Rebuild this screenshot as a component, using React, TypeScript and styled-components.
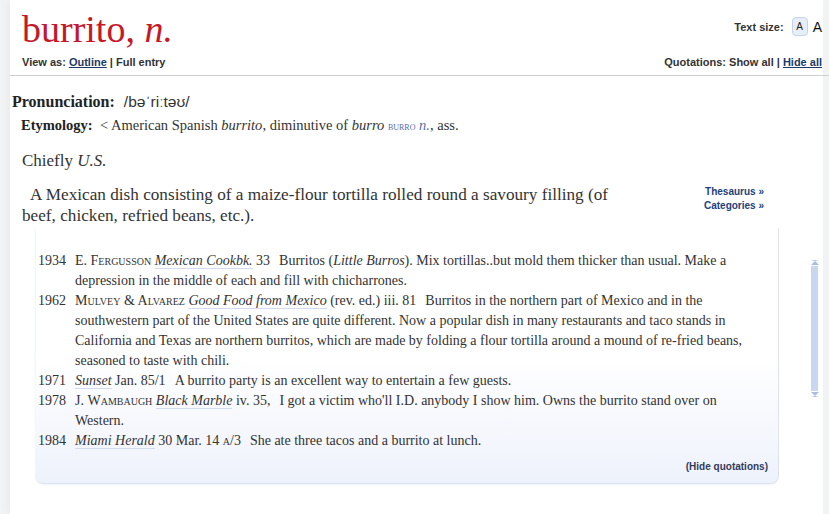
import styled, { createGlobalStyle } from 'styled-components'

const GlobalStyle = createGlobalStyle`
  body {
    margin: 0;
    background: #f2f3f4;
    font-family: 'Liberation Serif', 'Times New Roman', serif;
    color: #222;
  }
`

type Quote = {
  year: string
  author?: [string, string]
  title: string
  ref: React.ReactNode
  text: React.ReactNode
}

function getQuotes(): Quote[] {
  return [
    {
      year: '1934',
      author: ['E. ', 'Fergusson'],
      title: 'Mexican Cookbk.',
      ref: ' 33',
      text: (
        <>
          Burritos (<i>Little Burros</i>). Mix tortillas..but mold them thicker than usual. Make a
          depression in the middle of each and fill with chicharrones.
        </>
      ),
    },
    {
      year: '1962',
      author: ['', 'Mulvey & Alvarez'],
      title: 'Good Food from Mexico',
      ref: ' (rev. ed.) iii. 81',
      text: 'Burritos in the northern part of Mexico and in the southwestern part of the United States are quite different. Now a popular dish in many restaurants and taco stands in California and Texas are northern burritos, which are made by folding a flour tortilla around a mound of re-fried beans, seasoned to taste with chili.',
    },
    {
      year: '1971',
      title: 'Sunset',
      ref: ' Jan. 85/1',
      text: 'A burrito party is an excellent way to entertain a few guests.',
    },
    {
      year: '1978',
      author: ['J. ', 'Wambaugh'],
      title: 'Black Marble',
      ref: ' iv. 35,',
      text: "I got a victim who'll I.D. anybody I show him. Owns the burrito stand over on Western.",
    },
    {
      year: '1984',
      title: 'Miami Herald',
      ref: (
        <>
          {' 30 Mar. 14 '}
          <SmallCaps>a</SmallCaps>/3
        </>
      ),
      text: 'She ate three tacos and a burrito at lunch.',
    },
  ]
}

function App() {
  const quotes = getQuotes()
  return (
    <>
      <GlobalStyle />
      <Page>
        <Main>
          <Header>
            <TopRow>
              <Title>
                burrito, <em>n.</em>
              </Title>
              <TextSize>
                Text size: <SizeButton>A</SizeButton>
                <BigA>A</BigA>
              </TextSize>
            </TopRow>
            <SubRow>
              <ToolText>
                View as: <ToolLink>Outline</ToolLink> | Full entry
              </ToolText>
              <ToolText>
                Quotations: Show all | <ToolLink>Hide all</ToolLink>
              </ToolText>
            </SubRow>
          </Header>

          <Body>
            <Pronunciation>
              <Label>Pronunciation:</Label>
              <Ipa>/bəˈriːtəʊ/</Ipa>
            </Pronunciation>
            <Etymology>
              <Label>Etymology:</Label>&nbsp; &lt; American Spanish <i>burrito</i>, diminutive of{' '}
              <i>burro</i> <XRef>burro</XRef> <XRefPos>n.</XRefPos>, ass.
            </Etymology>
            <Usage>
              Chiefly <i>U.S.</i>
            </Usage>
            <DefRow>
              <DefText>
                A Mexican dish consisting of a maize-flour tortilla rolled round a savoury filling (of
                beef, chicken, refried beans, etc.).
              </DefText>
              <SideLinks>
                <SideLink>Thesaurus »</SideLink>
                <SideLink>Categories »</SideLink>
              </SideLinks>
            </DefRow>

            <QuoteSection>
              <QuoteBox>
                <QuoteList>
                  {quotes.map((q) => (
                    <QuoteRow key={q.year}>
                      <Year>{q.year}</Year>
                      <span>
                        {q.author && (
                          <>
                            {q.author[0]}
                            <SmallCaps>{q.author[1]}</SmallCaps>{' '}
                          </>
                        )}
                        <Work>{q.title}</Work>
                        <Ref>{q.ref}</Ref>
                        {q.text}
                      </span>
                    </QuoteRow>
                  ))}
                </QuoteList>
                <HideQuotes>(Hide quotations)</HideQuotes>
              </QuoteBox>
              <ScrollTrack>
                <ScrollArrow $up />
                <ScrollThumb />
                <ScrollArrow />
              </ScrollTrack>
            </QuoteSection>
          </Body>
        </Main>
      </Page>
    </>
  )
}

export default App

const Page = styled.div`
  display: flex;
  min-height: 514px;
`

const Main = styled.div`
  margin-left: 10px;
  width: 813px;
  min-height: 514px;
  background: #fff;
  box-shadow: -4px 0 8px rgba(0, 0, 0, 0.03);
`

const Header = styled.div`
  margin-right: -6px;
  padding: 9px 7px 6px 12px;
  border-bottom: 1px solid #cfcfcf;
`

const TopRow = styled.div`
  display: flex;
  justify-content: space-between;
  align-items: flex-start;
`

const Title = styled.h1`
  margin: 0;
  font-family: 'Liberation Serif', 'Times New Roman', serif;
  font-size: 38px;
  line-height: 40px;
  font-weight: normal;
  color: #c6182a;

  em {
    font-style: italic;
  }
`

const TextSize = styled.div`
  display: flex;
  align-items: center;
  margin-top: 8px;
  font-family: 'Liberation Sans', Arial, sans-serif;
  font-size: 11px;
  font-weight: bold;
  color: #333;
  white-space: pre;
`

const SizeButton = styled.span`
  display: inline-flex;
  align-items: center;
  justify-content: center;
  width: 14px;
  height: 17px;
  margin-left: 5px;
  border: 1px solid #c5d3ea;
  border-radius: 4px;
  background: #e8eef8;
  font-size: 10px;
  font-weight: normal;
  color: #222;
`

const BigA = styled.span`
  margin-left: 5px;
  font-size: 14px;
  font-weight: normal;
  color: #111;
`

const SubRow = styled.div`
  display: flex;
  justify-content: space-between;
  margin-top: 6px;
`

const ToolText = styled.div`
  font-family: 'Liberation Sans', Arial, sans-serif;
  font-size: 11px;
  line-height: 14px;
  font-weight: bold;
  color: #333;
`

const ToolLink = styled.span`
  color: #1d3a66;
  text-decoration: underline;
`

const Body = styled.div`
  padding-left: 2px;
`

const Pronunciation = styled.div`
  margin-top: 16px;
  font-size: 16px;
  line-height: 20px;
`

const Label = styled.b`
  color: #222;
`

const Ipa = styled.span`
  margin-left: 9px;
  font-family: 'Liberation Sans', Arial, sans-serif;
  font-size: 15.5px;
  color: #333;
`

const Etymology = styled.div`
  margin: 3px 0 0 9px;
  font-size: 14.5px;
  line-height: 20px;
  color: #333;
`

const XRef = styled.span`
  font-variant: small-caps;
  font-size: 11px;
  color: #5b6ea6;
`

const XRefPos = styled.i`
  color: #5b6ea6;
`

const Usage = styled.div`
  margin: 14px 0 0 10px;
  font-size: 17px;
  line-height: 21px;
  color: #333;
`

const DefRow = styled.div`
  display: flex;
  justify-content: space-between;
  align-items: flex-start;
  width: 742px;
  margin: 13px 0 0 10px;
`

const DefText = styled.p`
  margin: 0;
  width: 614px;
  font-size: 17.2px;
  line-height: 21px;
  text-indent: 8px;
  color: #333;
`

const SideLinks = styled.div`
  display: flex;
  flex-direction: column;
  align-items: flex-end;
  margin-top: 1px;
`

const SideLink = styled.span`
  font-family: 'Liberation Sans', Arial, sans-serif;
  font-size: 10px;
  line-height: 14px;
  font-weight: bold;
  color: #22427a;
`

const QuoteSection = styled.div`
  display: flex;
  align-items: flex-start;
  margin-left: 24px;
`

const QuoteBox = styled.div`
  margin-top: 2px;
  padding: 23px 10px 9px 2px;
  box-sizing: border-box;
  width: 743px;
  border-right: 1px solid #dde3f1;
  border-bottom: 1px solid #dde3f1;
  border-radius: 0 0 8px 8px;
  background: linear-gradient(to bottom, #ffffff 0%, #ffffff 50%, #eef2fb 100%);
  box-shadow: -1px 1px 2px rgba(210, 218, 238, 0.35);
`

const QuoteList = styled.div`
  padding-right: 7px;
`

const QuoteRow = styled.div`
  display: grid;
  grid-template-columns: 37px 1fr;
  font-size: 14px;
  line-height: 20px;
  color: #333;
`

const Year = styled.span`
  color: #333;
`

const SmallCaps = styled.span`
  font-variant: small-caps;
`

const Work = styled.i`
  border-bottom: 1px solid #d3dcef;
`

const Ref = styled.span`
  margin-right: 9px;
`

const HideQuotes = styled.div`
  margin-top: 9px;
  text-align: right;
  font-family: 'Liberation Sans', Arial, sans-serif;
  font-size: 10px;
  line-height: 14px;
  font-weight: bold;
  color: #333b58;
`

const ScrollTrack = styled.div`
  display: flex;
  flex-direction: column;
  align-items: center;
  width: 7px;
  margin: 34px 0 0 32px;
`

const ScrollThumb = styled.div`
  width: 7px;
  height: 125px;
  margin: 1px 0;
  background: #c9d6ef;
`

const ScrollArrow = styled.div<{ $up?: boolean }>`
  width: 0;
  height: 0;
  border-left: 4px solid transparent;
  border-right: 4px solid transparent;
  ${(p) =>
    p.$up
      ? 'border-bottom: 4px solid #a9bde3; border-top: 1px solid #a9bde3;'
      : 'border-top: 4px solid #a9bde3; border-bottom: 1px solid #a9bde3;'}
  box-sizing: content-box;
`
